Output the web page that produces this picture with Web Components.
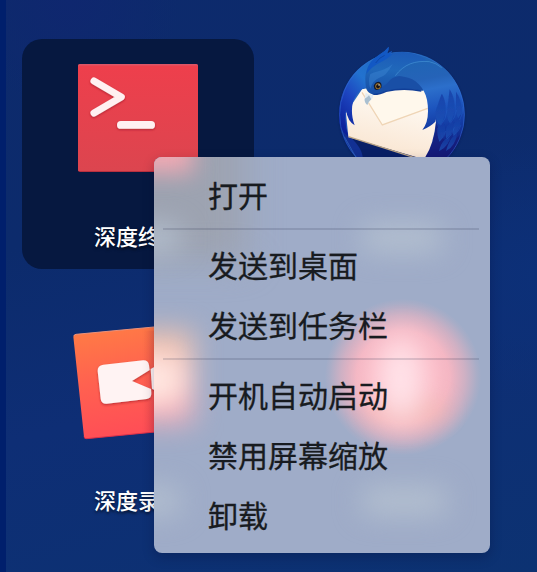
<!DOCTYPE html>
<html lang="zh-CN">
<head>
<meta charset="utf-8">
<title>启动器</title>
<style>
html,body{margin:0;width:537px;height:572px;overflow:hidden}
body{font-family:"Noto Sans CJK SC","Noto Sans",sans-serif}
</style>
</head>
<body>
<launcher-desktop>
  <app-tile selected label="深度终端"><terminal-icon></terminal-icon></app-tile>
  <app-tile><mail-icon></mail-icon></app-tile>
  <app-tile label="深度录屏"><recorder-icon></recorder-icon></app-tile>
  <context-menu slot="menu">
    <menu-item>打开</menu-item>
    <menu-separator></menu-separator>
    <menu-item>发送到桌面</menu-item>
    <menu-item>发送到任务栏</menu-item>
    <menu-separator></menu-separator>
    <menu-item>开机自动启动</menu-item>
    <menu-item>禁用屏幕缩放</menu-item>
    <menu-item>卸载</menu-item>
  </context-menu>
</launcher-desktop>
<script>
const define = (name, html, setup) => customElements.define(name, class extends HTMLElement {
  constructor() {
    super();
    this.attachShadow({ mode: 'open' }).innerHTML = html;
  }
  connectedCallback() { if (setup) setup(this, this.shadowRoot); }
});

define('launcher-desktop', `
<style>
:host{display:block;position:relative;box-sizing:border-box;width:537px;height:572px;overflow:hidden;
  border-left:6px solid #001f6c;
  background:radial-gradient(circle at 100% 48%,#0c3078 0,transparent 130px),
    radial-gradient(circle at 12% 0,#0f276f 0,transparent 110px),
    linear-gradient(165deg,#0d2a6c 0,#0c2b6c 35%,#0e2e75 62%,#0c3272 100%)}
.grid{display:grid;grid-template-columns:232px 232px;grid-auto-rows:230px;gap:34px 32px;padding:39px 0 0 16px}
::slotted([slot=menu]){position:absolute;left:148px;top:157px}
</style>
<div class="grid"><slot></slot></div><slot name="menu"></slot>`);

define('app-tile', `
<style>
:host{display:flex;flex-direction:column;align-items:center;gap:39px;border-radius:20px;min-width:0}
:host([selected]){background:#061840}
.label{font-size:22px;line-height:32px;font-weight:500;color:#fff;white-space:nowrap;text-shadow:0 2px 3px rgba(0,0,0,.6)}
</style>
<slot></slot><div class="label"></div>`, (el, root) => {
  const label = root.querySelector('.label');
  if (el.hasAttribute('label')) label.textContent = el.getAttribute('label');
  else label.remove();
});

const iconStyle = '<style>:host{display:block;width:170px;height:141px}svg{display:block;width:170px;height:141px;overflow:visible}</style>';

define('terminal-icon', iconStyle + `
<svg viewBox="53 39 170 141">
  <defs><linearGradient id="g" x2="0" y2="1"><stop stop-color="#ee3f4c"/><stop offset="1" stop-color="#dc454f"/></linearGradient>
  <filter id="s" x="-20%" y="-20%" width="140%" height="160%"><feDropShadow dx="0" dy="1" stdDeviation=".8" flood-color="#8c1522" flood-opacity=".6"/></filter></defs>
  <rect x="78" y="64" width="120" height="108" rx="2" fill="#b9303f"/>
  <rect x="78" y="64" width="120" height="107" rx="2" fill="#dc5566"/>
  <rect x="78" y="65.5" width="120" height="105.500" rx="1.5" fill="url(#g)"/>
  <path d="M94 81 L121.300 97 L94 113" fill="none" stroke="#fff0f1" stroke-linecap="round" stroke-linejoin="round" stroke-width="7" filter="url(#s)"/>
  <rect x="117" y="121" width="38" height="7.800" rx="3.900" fill="#fff0f1" filter="url(#s)"/>
</svg>`);

define('recorder-icon', iconStyle + `
<svg viewBox="9 9 510 423">
  <defs><linearGradient id="g" x1=".4" y1="0" x2=".6" y2="1"><stop stop-color="#ff7b45"/><stop offset=".45" stop-color="#ff6150"/><stop offset="1" stop-color="#ff4b57"/></linearGradient>
  <filter id="s" x="-20%" y="-20%" width="140%" height="150%"><feDropShadow dx="0" dy="4" stdDeviation="3" flood-color="#a01c26" flood-opacity=".65"/></filter>
  <linearGradient id="e"><stop stop-color="#b02030" stop-opacity="0"/><stop offset="1" stop-color="#b02030" stop-opacity=".15"/></linearGradient></defs>
  <path d="M78 103 L418 71 Q426 70 427 78 L456 375 Q456 382 449 383 L110 416 Q103 417 102 410 L70 110 Q70 104 78 103Z" fill="url(#g)"/>
  <path d="M72 108 Q72 104 78 103 L418 71" fill="none" stroke="#e9917b" stroke-width="3"/>
  <path d="M102 410 Q103 417 110 416 L449 383" fill="none" stroke="#dc3048" stroke-width="3"/>
  <rect x="280" y="92" width="34" height="302" fill="url(#e)"/>
  <g filter="url(#s)" fill="#fff3f3">
    <path d="M160 194 L279 181 Q295 180 297 196 L299 210 L246 243 L303 267 L304 279 Q305 295 290 297 L170 311 Q154 312 152 296 L143 213 Q142 197 160 194Z"/>
    <path d="M302 207 L350 180 V288 L306 266Z"/>
  </g>
</svg>`);

define('mail-icon', iconStyle + `
<svg viewBox="-9 27 510 423">
  <defs>
    <linearGradient id="left" x1=".8" y1="0" x2=".25" y2="1"><stop stop-color="#1f6cc4"/><stop offset=".3" stop-color="#2272cf"/><stop offset=".6" stop-color="#1d45c0"/><stop offset="1" stop-color="#0b1f98"/></linearGradient>
    <linearGradient id="head" x1=".5" y1="0" x2=".4" y2="1"><stop stop-color="#1b57b8"/><stop offset=".5" stop-color="#2068ba"/><stop offset="1" stop-color="#174fa8"/></linearGradient>
    <linearGradient id="wing" gradientUnits="userSpaceOnUse" x1="290" y1="90" x2="345" y2="385"><stop stop-color="#1f65b4"/><stop offset=".2" stop-color="#2563b8"/><stop offset=".31" stop-color="#2c6fcb"/><stop offset=".5" stop-color="#1d55be"/><stop offset=".72" stop-color="#1238a0"/><stop offset="1" stop-color="#151572"/></linearGradient>
    <linearGradient id="paper" x1=".6" y1="0" x2=".3" y2="1"><stop stop-color="#fffdf9"/><stop offset="1" stop-color="#f9e4cf"/></linearGradient>
    <linearGradient id="feather" x2="0" y2="1"><stop stop-color="#1437a0"/><stop offset="1" stop-color="#1e58ba"/></linearGradient>
    <filter id="soft"><feGaussianBlur stdDeviation="3"/></filter>
    <filter id="blend"><feGaussianBlur stdDeviation="1.500"/></filter>
    <clipPath id="round"><circle cx="246" cy="254" r="189"/></clipPath>
  </defs>
  <circle cx="246" cy="257" r="189" fill="#061a50" opacity=".45" filter="url(#soft)"/>
  <circle cx="246" cy="254" r="188.500" fill="url(#wing)"/>
  <g clip-path="url(#round)">
    <path d="M57 310 L84 318 L290 382 L280 450 H50Z" fill="#081f66"/>
    <path d="M56 235 L83 308 C104 339 127 348 130 393 L57 370Z" fill="#123093"/>
    <path d="M73 320 Q88 346 109 384" stroke="#2857b0" stroke-width="3" fill="none" filter="url(#blend)"/>
    <path d="M78 250 L126 178 Q220 154 315 184 L348 276 Q341 342 316 381 H288 L85 321Z" fill="url(#paper)"/>
    <path d="M126 180 L187 285 L322 236 L318 180 Q220 160 126 180Z" fill="#fff8ec"/>
    <path d="M126 187 L187 285 L323 235" fill="none" stroke="#efd5b6" stroke-width="4"/>
    <path d="M85 320 L281 382" stroke="#bba587" stroke-width="4"/>
    <path d="M59 286 C42 173 92 89 178 75 L139 171 C105 183 83 228 104 286 Q83 274 78 241 Q72 280 85 320 Q67 307 59 286Z" fill="url(#left)"/>
    <path d="M348 276 Q346 338 315 391 L386 389 Q423 349 433 300 Q394 352 365 323Z" fill="#141f79" opacity=".6" filter="url(#blend)"/>
    <g fill="url(#feather)" opacity=".7" filter="url(#blend)">
      <path d="M365 190 Q390 235 362 286 Q348 278 346 245Z"/>
      <path d="M389 178 Q418 225 391 281 Q379 270 382 235Z"/>
      <path d="M408 185 Q435 225 419 270 Q407 258 408 226Z"/>
      <path d="M369 276 Q387 304 358 335 Q350 313 352 294Z"/>
      <path d="M399 266 Q409 300 380 329 Q374 312 380 290Z"/>
      <path d="M423 253 Q428 292 401 318 Q396 305 402 281Z"/>
      <path d="M390 315 Q392 345 357 364 Q361 342 374 329Z"/>
      <path d="M413 305 Q406 350 378 363 Q385 338 395 325Z"/>
    </g>
    <g fill="none" stroke="#2766ca" stroke-width="2" opacity=".55">
      <path d="M381 240 Q380 265 362 286 M409 240 Q407 262 391 280 M428 230 Q429 252 419 270 M377 302 Q376 320 358 334 M403 292 Q400 313 380 328 M423 285 Q418 304 401 317"/>
    </g>
    <circle cx="246" cy="254" r="187" fill="none" stroke="#3570d6" stroke-width="3" opacity=".5"/>
  </g>
  <path d="M139 177 C129 118 147 96 181 72 Q195 64 206 50 Q207 61 201 71 L216 63 Q215 70 209 74 L218 68 C256 62 291 71 313 85 L348 149 Q330 172 308 182 C259 177 220 178 197 184 Q178 194 157 193 Q145 190 139 177Z" fill="url(#head)"/>
  <path d="M139 132 C143 98 161 86 181 72 Q195 64 206 50 Q207 61 201 71 L216 63 L209 74 L219 70 Q203 88 173 101 Q154 111 139 132Z" fill="#1258c4"/>
  <path d="M167 99 Q178 82 194 76" stroke="#0c3e9a" stroke-width="3" fill="none" opacity=".7"/>
  <path d="M151 132 C166 124 179 125 193 118 Q207 112 218 102 Q199 139 178 143 Q158 151 151 176 Q143 154 151 132Z" fill="#3c87d4" opacity=".45" filter="url(#blend)"/>
  <path d="M156 183 Q190 176 211 149 Q228 135 254 139 Q292 142 326 157 L307 181 C259 174 222 178 197 184 Q174 194 156 191Z" fill="#194fa6"/>
  <path d="M226 137 C252 103 284 91 328 95 C378 106 401 139 416 183 Q387 160 363 195 Q341 231 346 275 Q331 290 307 300 Q324 279 324 244 C325 195 306 164 277 148 Q253 137 226 137Z" fill="url(#wing)"/>
  <path d="M226 137 C252 103 284 91 328 95 Q349 99 365 113" fill="none" stroke="#4797d9" stroke-width="3" opacity=".6"/>
  <path d="M157 193 Q180 194 198 184 C237 175 274 177 304 183" fill="none" stroke="#103e97" stroke-width="4"/>
  <path d="M137 188 Q149 196 160 193 L158 205 Q148 210 142 225 Q133 218 134 206Z" fill="#e3ecf3"/>
  <path d="M134 206 Q143 202 147 196 L154 208 Q147 213 142 225 Q133 218 134 206Z" fill="#a9bfd0"/>
  <path d="M161 168 Q165 155 177 155 Q187 158 184 172 Q176 184 164 178Z" fill="#141a29"/>
  <ellipse cx="174" cy="169" rx="8" ry="9" fill="#b3812f"/><ellipse cx="174" cy="169" rx="5.500" ry="6.500" fill="#171316"/><circle cx="177" cy="165" r="2" fill="#d9e5ef"/>
</svg>`);

define('context-menu', `
<style>
:host{display:block;box-sizing:border-box;width:336px;height:396px;padding:10px 0 6px;border-radius:8px;
  box-shadow:0 4px 12px rgba(0,8,40,.25);
  background:#9facc8;overflow:hidden;position:relative}
.glow{position:absolute;inset:0;z-index:0;pointer-events:none}
.glow i{position:absolute;display:block}
.dark{left:-40px;top:-40px;width:132px;height:145px;background:#9da3b1;filter:blur(17px)}
.red{left:-30px;top:-34px;width:69px;height:50px;background:#f0a9b3;filter:blur(11px)}
.cap{height:26px;background:#b5c1d0;filter:blur(14px);border-radius:10px}
.rec{left:-40px;top:174px;width:79px;height:92px;background:linear-gradient(#f2c2a9,#f9ccc8 50%,#f9adb9);filter:blur(14px)}
.reclight{left:-30px;top:202px;width:56px;height:42px;border-radius:14px;background:#ffe6e0;filter:blur(12px)}
.ball{left:171px;top:142px;width:156px;height:156px;border-radius:50%;
  background:radial-gradient(circle,#fbbac6 0,#fab7c3 28%,rgba(249,182,194,.95) 42%,rgba(246,180,192,.55) 56%,rgba(240,180,190,.12) 67%,transparent 71%)}
.warm{left:210px;top:238px;width:84px;height:30px;border-radius:50%;background:#f0b4a8;opacity:.55;filter:blur(10px)}
.shine{left:223px;top:178px;width:48px;height:88px;border-radius:50%;background:#ffe4ea;filter:blur(15px)}
.items{position:relative;z-index:1}
</style>
<div class="glow"><i class="dark"></i><i class="red"></i><i class="cap" style="left:-20px;top:68px;width:46px"></i>
<i class="cap" style="left:208px;top:68px;width:80px"></i><i class="rec"></i><i class="reclight"></i>
<i class="ball"></i><i class="warm"></i><i class="shine"></i><i class="cap" style="left:-20px;top:331px;width:46px"></i>
<i class="cap" style="left:208px;top:331px;width:84px"></i></div>
<div class="items"><slot></slot></div>`);

define('menu-item', `
<style>:host{display:flex;align-items:center;box-sizing:border-box;height:60px;padding:0 0 6px 54px;font-size:30px;line-height:44px;color:#181b20;white-space:nowrap;-webkit-text-stroke:.3px #181b20}</style>
<slot></slot>`);

define('menu-separator', `
<style>:host{display:block;box-sizing:border-box;height:10px;padding:1px 11px 0 9px}
div{height:2px;background:rgba(35,45,75,.16)}</style><div></div>`);
</script>
</body>
</html>
